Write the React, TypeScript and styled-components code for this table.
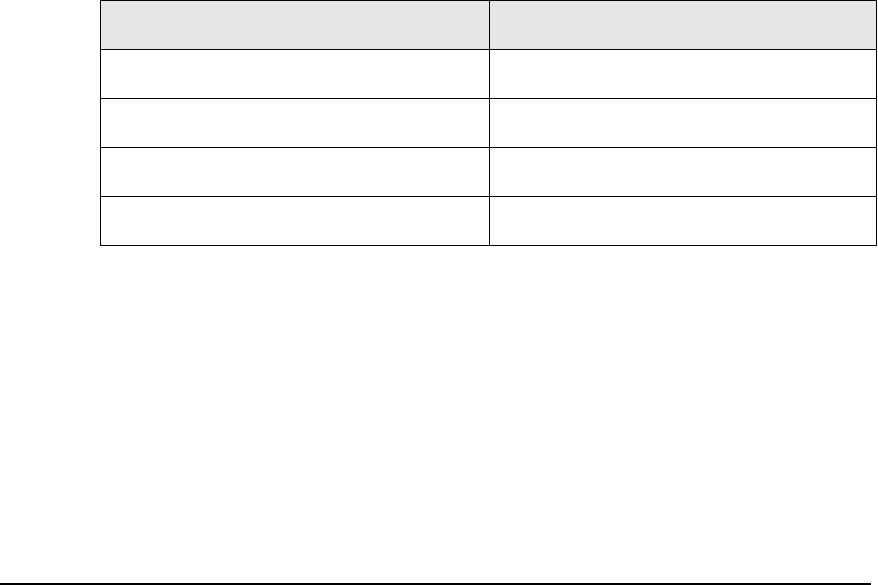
import React from 'react';
import styled, { createGlobalStyle } from 'styled-components';

const GlobalStyle = createGlobalStyle`
  html, body {
    margin: 0;
    padding: 0;
    background: #ffffff;
    font-family: "Liberation Sans", Arial, sans-serif;
  }
`;

const rows = [0, 1, 2, 3];

const App = () => {
  return (
    <React.Fragment>
      <GlobalStyle />
      <Page>
        <Grid>
          <thead>
            <tr>
              <HeadCell />
              <HeadCell />
            </tr>
          </thead>
          <tbody>
            {rows.map((r) => (
              <tr key={r}>
                <Cell />
                <Cell />
              </tr>
            ))}
          </tbody>
        </Grid>
        <FootRule />
      </Page>
    </React.Fragment>
  );
};

const Page = styled.div`
  display: flex;
  flex-direction: column;
  justify-content: space-between;
  height: 585px;
  box-sizing: border-box;
  padding-bottom: 0;
`;

const Grid = styled.table`
  border-collapse: collapse;
  margin-left: 100px;
  width: 777px;
  table-layout: fixed;
`;

const HeadCell = styled.th`
  height: 48px;
  padding: 0;
  border: 1px solid #000;
  background: #e5e5e5;
  &:first-child {
    width: 388px;
  }
`;

const Cell = styled.td`
  height: 48px;
  padding: 0;
  border: 1px solid #000;
  background: #fff;
`;

const FootRule = styled.div`
  width: 871px;
  height: 2px;
  margin-bottom: 0;
  background: #000;
`;

export default App;
